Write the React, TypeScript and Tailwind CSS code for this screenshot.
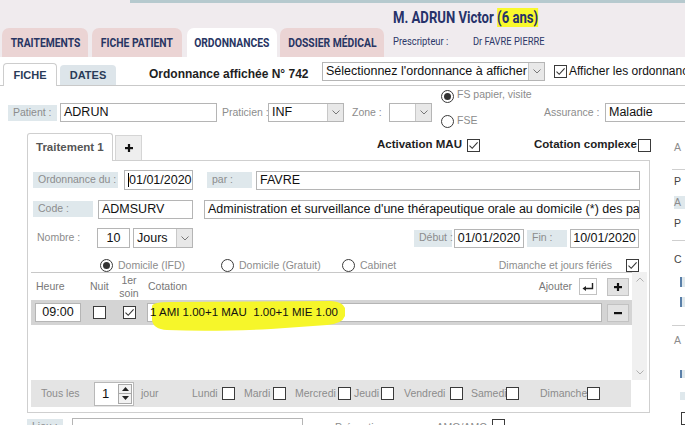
import React from "react";

function Check({ checked = false, className = "" }: { checked?: boolean; className?: string }) {
  return (
    <div className={`flex h-[13px] w-[13px] shrink-0 items-center justify-center border border-[#3a3a3a] bg-white ${className}`}>
      {checked && (
        <svg width="11" height="11" viewBox="0 0 11 11">
          <polyline points="1.5,5.6 4.2,8.3 9.6,2.3" fill="none" stroke="#333" strokeWidth="1.1" />
        </svg>
      )}
    </div>
  );
}

function Radio({ on = false }: { on?: boolean }) {
  return (
    <div className="flex h-[13px] w-[13px] shrink-0 items-center justify-center rounded-full border border-[#3a3a3a] bg-white">
      {on && <div className="h-[7px] w-[7px] rounded-full bg-[#333]" />}
    </div>
  );
}

function Lbl({ text, className = "" }: { text: string; className?: string }) {
  return (
    <div className={`flex h-[16px] shrink-0 items-center whitespace-nowrap bg-[#dfe8ec] pl-[5px] text-[10.5px] text-[#8c8c8c] ${className}`}>
      {text}
    </div>
  );
}

function Field({ children, className = "" }: { children?: React.ReactNode; className?: string }) {
  return (
    <div className={`flex h-[19px] shrink-0 items-center overflow-hidden whitespace-pre border border-[#b5b5b5] bg-white px-[3px] text-[12.5px] text-[#111] ${className}`}>
      {children}
    </div>
  );
}

function Chevron() {
  return (
    <svg width="8" height="5" viewBox="0 0 8 5">
      <polyline points="0.5,0.5 4,4 7.5,0.5" fill="none" stroke="#777" strokeWidth="1" />
    </svg>
  );
}

function Select({ value, className = "" }: { value: string; className?: string }) {
  return (
    <div className={`flex h-[19px] shrink-0 border border-[#b5b5b5] bg-white ${className}`}>
      <div className="flex flex-1 items-center overflow-hidden whitespace-nowrap px-[3px] text-[12.5px] text-[#111]">{value}</div>
      <div className="flex w-[16px] shrink-0 items-center justify-center border-l border-[#c8c8c8] bg-[#e8e8e8]">
        <Chevron />
      </div>
    </div>
  );
}

function HTab({ label, w, active = false }: { label: string; w: string; active?: boolean }) {
  return (
    <div className={`flex h-[29px] shrink-0 items-center justify-center rounded-t-[7px] ${w} ${active ? "bg-white" : "bg-[#ebd4d4]"}`}>
      <span className="inline-block scale-x-[0.86] whitespace-nowrap font-['Roboto',sans-serif] text-[12px] font-bold text-[#283563]">
        {label}
      </span>
    </div>
  );
}

function SqButton({ kind }: { kind: "plus" | "minus" }) {
  return (
    <div className="flex h-[18px] w-[22px] shrink-0 items-center justify-center border border-[#c2c2c2] bg-[#e2e2e2]">
      <svg width="10" height="10" viewBox="0 0 10 10">
        <rect x="1" y="4" width="8" height="2.2" fill="#111" />
        {kind === "plus" && <rect x="3.9" y="1" width="2.2" height="8" fill="#111" />}
      </svg>
    </div>
  );
}

const days: [string, string, string][] = [
  ["Lundi", "ml-0", "w-[28px]"],
  ["Mardi", "ml-[9px]", "w-[27px]"],
  ["Mercredi", "ml-[9px]", "w-[41px]"],
  ["Jeudi", "ml-[3px]", "w-[25px]"],
  ["Vendredi", "ml-[10px]", "w-[44px]"],
  ["Samedi", "ml-[8px]", "w-[33px]"],
  ["Dimanche", "ml-[21px]", "w-[45px]"],
];

export default function App() {
  return (
    <div className="relative h-[425px] w-[685px] overflow-hidden bg-white font-['Liberation_Sans',Arial,sans-serif]">
      {/* top header */}
      <div className="flex h-[57px] flex-col bg-[#f0ebee]">
        <div className="ml-[130px] h-[3px] bg-[#b6c9ce]" />
        <div className="flex flex-1">
          <div className="flex shrink-0 items-end pl-[2px]">
            <HTab label="TRAITEMENTS" w="w-[86px]" />
            <div className="ml-[4px]">
              <HTab label="FICHE PATIENT" w="w-[90px]" />
            </div>
            <div className="ml-[5px]">
              <HTab label="ORDONNANCES" w="w-[90px]" active />
            </div>
            <div className="ml-[3px]">
              <HTab label="DOSSIER MÉDICAL" w="w-[104px]" />
            </div>
          </div>
          <div className="ml-[9px] flex shrink-0 flex-col pt-[5px]">
            <div className="origin-left scale-x-[0.82] whitespace-nowrap font-['Roboto',sans-serif] text-[16px] font-bold leading-[20px] text-[#27326a]">
              M. ADRUN Victor <span className="bg-[#f9f92c]">(6 ans)</span>
            </div>
            <div className="mt-[7px] flex origin-left scale-x-[0.85] whitespace-nowrap font-['Roboto',sans-serif] text-[11px] leading-[14px] text-[#2c3868]">
              <span className="w-[94px]">Prescripteur :</span>
              <span>Dr FAVRE PIERRE</span>
            </div>
          </div>
        </div>
      </div>

      {/* sub tabs */}
      <div className="flex h-[29px] items-end border-b border-[#c9c9c9]">
        <div className="relative z-10 -mb-px ml-[3px] flex h-[23px] w-[54px] shrink-0 items-center justify-center rounded-t-[4px] border border-b-0 border-[#cdcdcd] bg-white text-[11px] font-bold text-[#2a3b58]">
          FICHE
        </div>
        <div className="ml-[3px] flex h-[20px] w-[56px] shrink-0 items-center justify-center rounded-t-[4px] bg-[#dde5ea] text-[11px] font-bold text-[#2a3b58]">
          DATES
        </div>
        <div className="ml-[33px] mt-[6px] w-[157px] shrink-0 self-center whitespace-nowrap text-[12px] font-bold text-[#1e1e1e]">
          Ordonnance affichée N° 742
        </div>
        <Select value="Sélectionnez l'ordonnance à afficher" className="ml-[16px] w-[223px] self-center" />
        <Check checked className="ml-[9px] self-center" />
        <div className="ml-[2px] shrink-0 self-center whitespace-nowrap text-[12px] text-[#111]">Afficher les ordonnances</div>
      </div>

      {/* patient row */}
      <div className="mt-[17px] flex h-[19px] items-center">
        <Lbl text="Patient :" className="ml-[8px] w-[49px]" />
        <Field className="ml-[3px] w-[157px]">ADRUN</Field>
        <div className="ml-[5px] w-[46px] shrink-0 whitespace-nowrap text-[10.5px] text-[#8c8c8c]">Praticien :</div>
        <Select value="INF" className="w-[76px]" />
        <div className="ml-[8px] w-[37px] shrink-0 text-[10.5px] text-[#8c8c8c]">Zone :</div>
        <Select value="" className="w-[43px]" />
        <div className="-mt-[6px] ml-[9px] flex h-[43px] w-[103px] shrink-0 flex-col justify-between py-[2px]">
          <div className="flex items-center">
            <Radio on />
            <span className="-mt-[3px] ml-[3px] whitespace-nowrap text-[10.5px] text-[#8c8c8c]">FS papier, visite</span>
          </div>
          <div className="flex items-center">
            <Radio />
            <span className="ml-[3px] text-[10.5px] text-[#8c8c8c]">FSE</span>
          </div>
        </div>
        <div className="w-[58px] shrink-0 whitespace-nowrap text-[10.5px] text-[#8c8c8c]">Assurance :</div>
        <Field className="ml-[3px] w-[100px]">Maladie</Field>
      </div>

      {/* main */}
      <div className="mt-[11px] flex">
        <div className="flex w-[650px] shrink-0 flex-col">
          <div className="flex h-[27px] items-end pl-[27px]">
            <div className="relative z-10 -mb-px flex h-[28px] w-[86px] shrink-0 items-center rounded-t-[3px] border border-b-0 border-[#cfcfcf] bg-white pl-[8px] text-[11.5px] font-bold text-[#555]">
              Traitement 1
            </div>
            <div className="ml-[2px] flex h-[25px] w-[27px] shrink-0 items-center justify-center border border-b-0 border-[#d5d5d5] bg-[#eeeeee]">
              <svg width="10" height="10" viewBox="0 0 10 10">
                <rect x="1" y="4" width="8" height="2.2" fill="#111" />
                <rect x="3.9" y="1" width="2.2" height="8" fill="#111" />
              </svg>
            </div>
            <div className="-mt-[3px] ml-[235px] flex shrink-0 items-center self-center">
              <span className="w-[85px] whitespace-nowrap text-[11.5px] font-bold text-[#1e1e1e]">Activation MAU</span>
              <Check checked className="ml-[5px]" />
              <span className="ml-[54px] w-[104px] whitespace-nowrap text-[11.5px] font-bold text-[#1e1e1e]">Cotation complexe</span>
              <Check />
            </div>
          </div>

          <div className="ml-[27px] flex h-[253px] w-[623px] flex-col border border-[#cfcfcf]">
            <div className="mt-[9px] flex h-[20px] items-center">
              <Lbl text="Ordonnance du :" className="ml-[5px] w-[85px]" />
              <Field className="ml-[6px] h-[20px] w-[69px]">
                <span className="h-[14px] border-l border-black" />
                01/01/2020
              </Field>
              <Lbl text="par :" className="ml-[14px] w-[45px]" />
              <Field className="ml-[4px] w-[384px]">FAVRE</Field>
            </div>
            <div className="mt-[10px] flex h-[18px] items-center">
              <Lbl text="Code :" className="ml-[5px] w-[60px]" />
              <Field className="ml-[5px] h-[18px] w-[95px]">ADMSURV</Field>
              <Field className="ml-[11px] h-[18px] w-[436px]">
                Administration et surveillance d'une thérapeutique orale au domicile (*) des patients
              </Field>
            </div>
            <div className="mt-[10px] flex h-[20px] items-center">
              <div className="ml-[9px] w-[60px] shrink-0 text-[10.5px] text-[#8c8c8c]">Nombre :</div>
              <Field className="h-[20px] w-[33px] justify-center">10</Field>
              <Select value="Jours" className="ml-[3px] h-[20px] w-[60px]" />
              <Lbl text="Début :" className="ml-[221px] h-[17px] w-[38px]" />
              <Field className="ml-[2px] w-[70px] justify-center">01/01/2020</Field>
              <Lbl text="Fin :" className="ml-[3px] h-[17px] w-[40px]" />
              <Field className="ml-[3px] w-[69px] justify-center">10/01/2020</Field>
            </div>
            <div className="mt-[11px] flex h-[13px] items-center text-[10.5px] text-[#8c8c8c]">
              <div className="ml-[72px] flex w-[121px] shrink-0 items-center">
                <Radio on />
                <span className="ml-[5px]">Domicile (IFD)</span>
              </div>
              <div className="flex w-[121px] shrink-0 items-center">
                <Radio />
                <span className="ml-[5px]">Domicile (Gratuit)</span>
              </div>
              <div className="flex items-center">
                <Radio />
                <span className="ml-[5px]">Cabinet</span>
              </div>
              <span className="ml-auto">Dimanche et jours fériés</span>
              <Check checked className="ml-[14px] mr-[10px]" />
            </div>

            {/* table */}
            <div className="ml-[3px] flex h-[108px]">
              <div className="flex w-[601px] shrink-0 flex-col border-t border-[#c8c8c8]">
                <div className="flex h-[27px] items-center text-[10.5px] text-[#777]">
                  <span className="ml-[5px] w-[54px]">Heure</span>
                  <span className="w-[28px]">Nuit</span>
                  <span className="w-[22px] text-center leading-[13px]">
                    1er
                    <br />
                    soin
                  </span>
                  <span className="ml-[8px]">Cotation</span>
                  <span className="ml-auto">Ajouter</span>
                  <div className="ml-[7px] flex h-[17px] w-[18px] items-center justify-center border border-[#c2c2c2] bg-white">
                    <svg width="14" height="10" viewBox="0 0 14 10">
                      <path d="M11.5 1 V6.5 H4" fill="none" stroke="#222" strokeWidth="1.4" />
                      <polygon points="1.5,6.5 5,4 5,9" fill="#222" />
                    </svg>
                  </div>
                  <div className="ml-[10px] mr-[3px]">
                    <SqButton kind="plus" />
                  </div>
                </div>
                <div className="relative flex h-[25px] items-center bg-[#d4d4d4]">
                  <Field className="ml-[4px] h-[16px] w-[46px] justify-center">09:00</Field>
                  <Check className="ml-[12px]" />
                  <Check checked className="ml-[17px]" />
                  <Field className="ml-[11px] h-[18px] w-[455px] pl-[2px]">
                    <span className="relative z-10 text-[11.5px]">1 AMI 1.00+1 MAU  1.00+1 MIE 1.00</span>
                  </Field>
                  <div className="ml-[5px]">
                    <SqButton kind="minus" />
                  </div>
                  <svg className="pointer-events-none absolute left-0 top-0" width="330" height="32" viewBox="0 0 330 32">
                    <path
                      d="M121,6 Q122,2 140,2 L300,1 Q312,2 314,8 L314,16 Q311,24 296,25 L240,29 Q180,32 136,30 Q122,29 121,20 Z"
                      fill="#f6f62a"
                    />
                  </svg>
                </div>
              </div>
              <div className="flex w-[15px] flex-col items-center justify-between bg-[#f0f0f0] py-[5px]">
                <svg width="8" height="5" viewBox="0 0 8 5">
                  <polyline points="0.5,4.5 4,1 7.5,4.5" fill="none" stroke="#b0b0b0" strokeWidth="1" />
                </svg>
                <svg width="8" height="5" viewBox="0 0 8 5">
                  <polyline points="0.5,0.5 4,4 7.5,0.5" fill="none" stroke="#b0b0b0" strokeWidth="1" />
                </svg>
              </div>
            </div>

            {/* repeat bar */}
            <div className="ml-[3px] flex h-[27px] w-[600px] items-center bg-[#e4e4e4] text-[10.5px] text-[#8c8c8c]">
              <span className="ml-[10px] w-[53px] shrink-0">Tous les</span>
              <div className="flex h-[24px] w-[40px] shrink-0 items-center border border-[#b8b8b8] bg-white">
                <span className="pl-[7px] text-[13px] text-[#111]">1</span>
                <div className="ml-auto mr-[1px] flex h-[20px] w-[14px] flex-col border border-[#a8a8a8] bg-[#f2f2f2]">
                  <div className="flex flex-1 items-center justify-center border-b border-[#a8a8a8]">
                    <svg width="7" height="4" viewBox="0 0 7 4">
                      <polygon points="0,4 3.5,0 7,4" fill="#222" />
                    </svg>
                  </div>
                  <div className="flex flex-1 items-center justify-center">
                    <svg width="7" height="4" viewBox="0 0 7 4">
                      <polygon points="0,0 3.5,4 7,0" fill="#222" />
                    </svg>
                  </div>
                </div>
              </div>
              <span className="ml-[7px] w-[51px] shrink-0">jour</span>
              {days.map(([d, ml, w]) => (
                <div key={d} className={`flex shrink-0 items-center ${ml}`}>
                  <span className={w}>{d}</span>
                  <Check className="ml-[2px]" />
                </div>
              ))}
            </div>
          </div>

          <div className="flex items-start">
            <Lbl text="Lieu :" className="ml-[27px] mt-[6px] w-[36px]" />
            <Field className="ml-[9px] mt-[5px] h-[20px] w-[231px]" />
            <div className="ml-[32px] mt-[8px] w-[157px] shrink-0 whitespace-nowrap text-[10.5px] leading-[13px] text-[#8c8c8c]">
              Prévention commune AMO/AMC
            </div>
            <Check className="mt-[6px]" />
          </div>
        </div>

        {/* right column, cut off */}
        <div className="flex flex-1 flex-col pl-[24px] text-[10.5px] text-[#8c8c8c]">
          <div className="mt-[8px] leading-[13px]">A</div>
          <div className="-ml-[2px] mt-[15px] h-px bg-[#cfcfcf]" />
          <div className="mt-[5px] leading-[13px] text-[#444]">P</div>
          <div className="mt-[8px] h-[13px] bg-[#dfe8ec] leading-[13px]">A</div>
          <div className="mt-[8px] leading-[13px] text-[#444]">P</div>
          <div className="-ml-[2px] mt-[10px] h-px bg-[#cfcfcf]" />
          <div className="mt-[12px] leading-[13px] text-[#444]">C</div>
          <div className="ml-[6px] mt-[11px] h-[10px] border-l-2 border-[#5a7fa8] bg-[#dfe8ec]" />
          <div className="ml-[6px] mt-[10px] h-[10px] border-l-2 border-[#5a7fa8] bg-[#dfe8ec]" />
          <div className="-ml-[2px] mt-[18px] h-px bg-[#cfcfcf]" />
          <div className="mt-[8px] leading-[13px]">A</div>
          <div className="ml-[6px] mt-[23px] h-[8px] border-l-2 border-[#5a7fa8] bg-[#dfe8ec]" />
          <div className="ml-[6px] mt-[14px] h-[8px] bg-[#dfe8ec]" />
          <div className="ml-[7px] mt-[12px]">
            <Check />
          </div>
        </div>
      </div>
    </div>
  );
}
